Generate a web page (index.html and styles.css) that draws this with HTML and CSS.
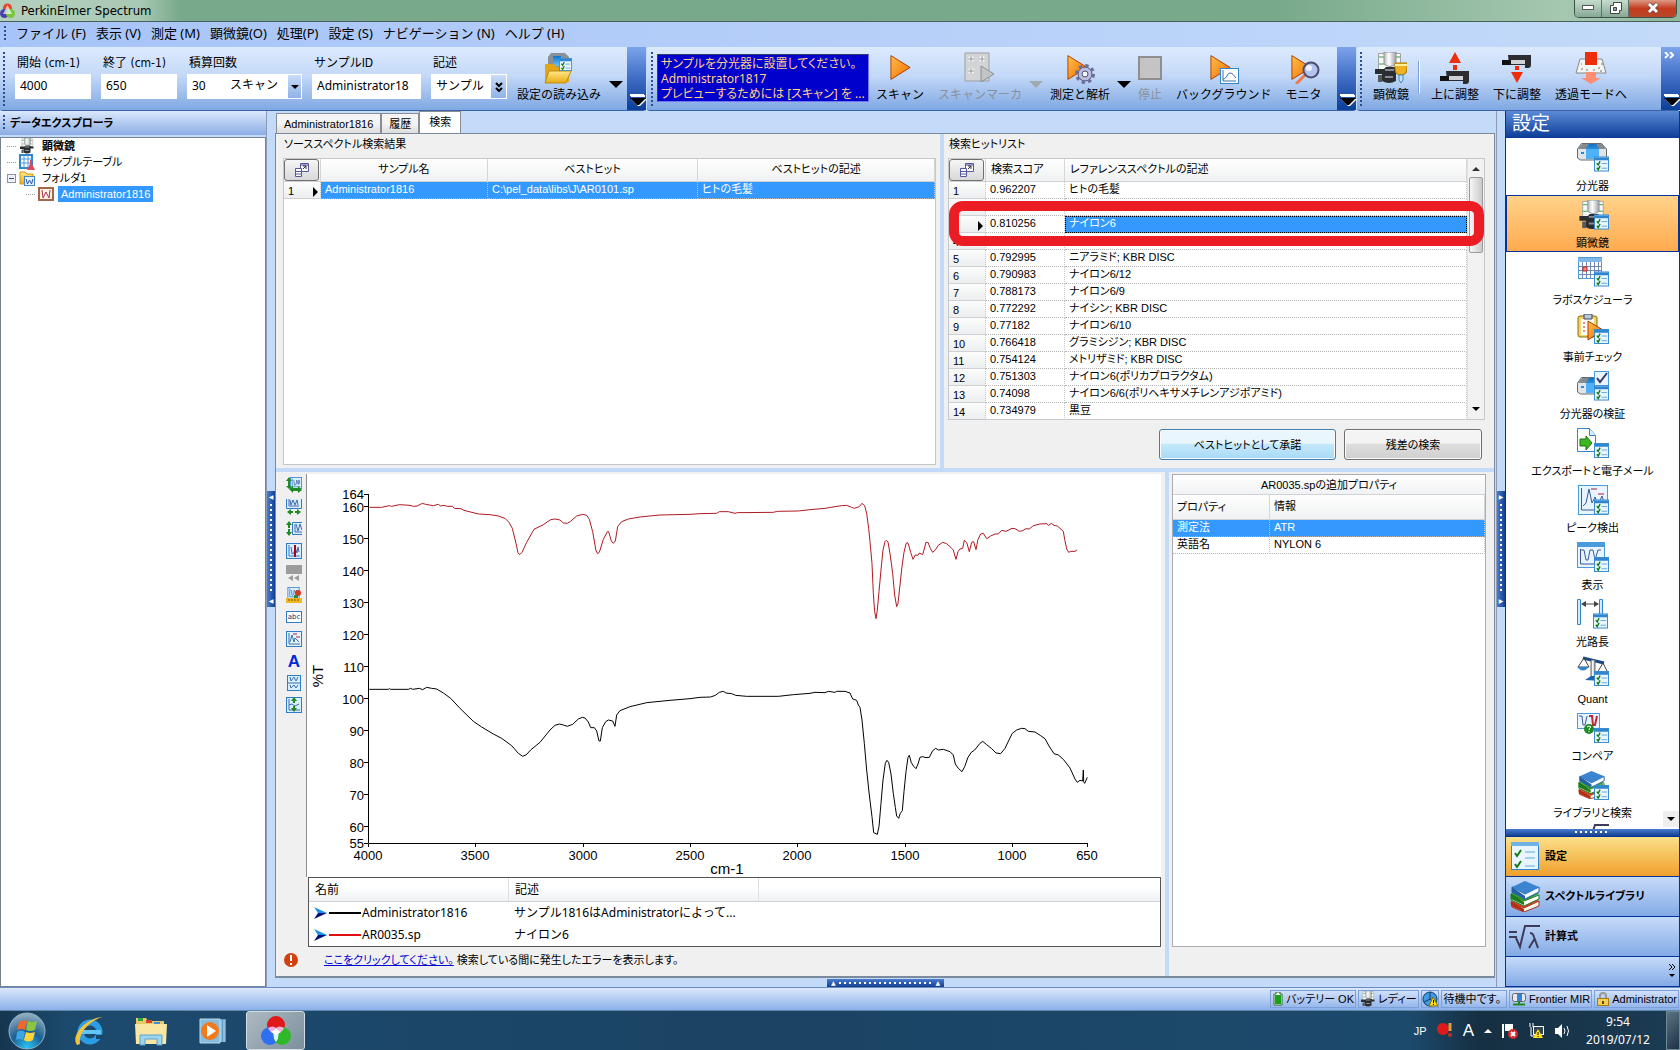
FILE: index.html
```html
<!DOCTYPE html>
<html lang="ja">
<head>
  <meta charset="UTF-8">
  <meta name="viewport" content="width=device-width, initial-scale=1.0">
  <title>PerkinElmer Spectrum</title>
  <link rel="stylesheet" href="styles.css">
</head>
<body>
  <!-- 共通アイコン -->
  <svg class="defs" width="0" height="0" aria-hidden="true">
    <defs>
      <linearGradient id="gOrange" x1="0" y1="0" x2="1" y2="1"><stop offset="0" stop-color="#ffc04a"/><stop offset="1" stop-color="#f26a00"/></linearGradient>
      <linearGradient id="gMetal" x1="0" y1="0" x2="1" y2="0"><stop offset="0" stop-color="#b4b8bb"/><stop offset=".4" stop-color="#fff"/><stop offset="1" stop-color="#9da2a6"/></linearGradient>
      <linearGradient id="gBlue" x1="0" y1="0" x2="0" y2="1"><stop offset="0" stop-color="#0d74cc"/><stop offset="1" stop-color="#6cc4ff"/></linearGradient>
      <linearGradient id="gFolder" x1="0" y1="0" x2="0" y2="1"><stop offset="0" stop-color="#ffe98a"/><stop offset="1" stop-color="#e8ab12"/></linearGradient>
      <symbol id="badge" viewBox="0 0 16 16">
        <rect x=".5" y=".5" width="15" height="15" fill="#eaf6ff" stroke="#2f86cf"/>
        <rect x="1" y="1" width="14" height="3" fill="#2f86cf"/>
        <path d="M3 7l1.500 2L6.500 5M3 12l1.500 2 2-4" fill="none" stroke="#157a15" stroke-width="1.500"/>
        <path d="M8 7.500h6M8 12.500h6" stroke="#5fa9de"/>
      </symbol>
      <symbol id="play" viewBox="0 0 24 28"><path d="M1 1v26l21-13z" fill="url(#gOrange)" stroke="#a63a00"/></symbol>
      <symbol id="scope" viewBox="0 0 28 32">
        <path d="M3.500 1.500h22v18h-22z" fill="#f6f8f6" stroke="#9fa69f"/><path d="M4 5h5M20 5h5M4 12h5M20 12h5" stroke="#3f9a4a"/>
        <path d="M9 0h12v12q-6 5-12 0z" fill="url(#gMetal)" stroke="#8f9498"/>
        <path d="M0 17h9l2-2h9l3 2h4v4h-6v8q-7 4-14 0v-7H0z" fill="#2b2e30"/>
        <path d="M10 18h9M10 25h8" stroke="#868c91" stroke-width="2"/><path d="M3 23h4v7H3z" fill="#55595c"/>
      </symbol>
      <symbol id="device" viewBox="0 0 30 18">
        <path d="M.500 6l4-5.500h20L29.500 6v9l-3 2h-23l-3-2z" fill="#e2e4e6" stroke="#666b70"/>
        <path d="M1 6l4-5h20l4 5z" fill="#858a8f"/><path d="M9 6l3-5h7l3 5v10H9z" fill="url(#gBlue)"/><path d="M9 6h13v10H9z" fill="#4fb2f8"/><path d="M4 10h3" stroke="#1e8ae0" stroke-width="2"/>
      </symbol>
      <symbol id="books" viewBox="0 0 32 32">
        <path d="M2 22l13 6 15-7v5l-15 6-12-5z" fill="#f6f2ee" stroke="#a83220"/><path d="M2 21l14-6 14 6-15 7z" fill="#d2401f"/><path d="M2 21v5l13 6v-3z" fill="#b62e10"/>
        <path d="M2 14l13 7 15-6v4l-15 7-13-6z" fill="#fff" stroke="#1d7a1d"/><path d="M2 13l14-6 14 7-15 7z" fill="#2f9d2f"/><path d="M2 13v6l13 6v-3z" fill="#1c7c1c"/>
        <path d="M3 7l13 7 14-7v5l-14 7-13-7z" fill="#f6faff" stroke="#1b5fa8"/><path d="M3 7l13-6 14 6-14 7z" fill="#3b85d0"/><path d="M3 7v5l13 7v-3z" fill="#2260a8"/>
      </symbol>
      <symbol id="fieldBtn" viewBox="0 0 14 14">
        <path d="M5.500.500h8v8h-8z" fill="#fff" stroke="#56589c"/><path d="M6 1h7v2H6z" fill="#9a9cd0"/><path d="M.500 5.500h6v8h-6zM1 8.500h5M1 11h5" fill="#fff" stroke="#56589c"/><path d="M8 6l3-3m0 3V3H8" stroke="#333" fill="none"/>
      </symbol>
      <symbol id="wave" viewBox="0 0 16 16"><rect x=".5" y=".5" width="15" height="15" fill="#d8efff" stroke="#2f7cc8"/><path d="M3 2v11h11" stroke="#2f7cc8" fill="none"/><path d="M5 4l1 7 2-1 1-6 2 6 1-6 1 5" fill="none" stroke="#4668a8"/></symbol>
      <symbol id="cursor" viewBox="0 0 14 14"><path d="M0 1l13 6H4z" fill="#1e90e8"/><path d="M0 13l13-6H4z" fill="#00107a"/></symbol>
    </defs>
  </svg>

  <header class="titlebar">
    <svg width="15" height="16" viewBox="0 0 15 16"><circle cx="7.500" cy="5" r="4.500" fill="#e8462c"/><circle cx="4.500" cy="10.500" r="4.500" fill="#4a3fae"/><circle cx="10.500" cy="10.500" r="4.500" fill="#78c83a"/><path d="M7.500 2l4.500 9H3z" fill="#fff" opacity=".65"/></svg>
    <h1>PerkinElmer Spectrum</h1>
    <div class="win-buttons">
      <button aria-label="最小化"><svg width="12" height="6"><rect x=".5" y=".5" width="11" height="4" fill="#fff" stroke="#555"/></svg></button>
      <button aria-label="元に戻す"><svg width="13" height="12"><path d="M4.500.500h8v8h-2v3h-9v-8h3z" fill="#fff" stroke="#444"/><path d="M4.500 5.500h3v3h-3z" fill="#8aa" stroke="#444"/></svg></button>
      <button class="close" aria-label="閉じる"><svg width="14" height="12"><path d="M3 2l8 8m0-8l-8 8" stroke="#444" stroke-width="4"/><path d="M3 2l8 8m0-8l-8 8" stroke="#fff" stroke-width="3"/></svg></button>
    </div>
  </header>

  <nav class="menubar">
    <span class="grip"></span>
    <a href="#">ファイル (F)</a><a href="#">表示 (V)</a><a href="#">測定 (M)</a><a href="#">顕微鏡(O)</a><a href="#">処理(P)</a><a href="#">設定 (S)</a><a href="#">ナビゲーション (N)</a><a href="#">ヘルプ (H)</a>
  </nav>

  <div class="toolbars">
    <div class="toolbar toolbar-scan">
      <span class="grip"></span>
      <div class="field"><label for="start">開始 (cm-1)</label><input id="start" type="text" value="4000"></div>
      <div class="field"><label for="end">終了 (cm-1)</label><input id="end" type="text" value="650"></div>
      <div class="field field-count"><label for="count">積算回数</label>
        <div class="combo"><input id="count" type="text" value="30"><select aria-label="単位"><option>スキャン</option></select><span class="drop"><i class="tri small"></i></span></div>
      </div>
      <div class="field field-id"><label for="sid">サンプルID</label><input id="sid" type="text" value="Administrator18"></div>
      <div class="field field-desc"><label for="desc">記述</label>
        <div class="combo"><input id="desc" type="text" value="サンプル"><button class="drop" aria-label="展開"><svg width="8" height="10"><path d="M1 1l3 3 3-3M1 6l3 3 3-3" fill="none" stroke="#000" stroke-width="2"/></svg></button></div>
      </div>
      <button class="tool"><svg width="32" height="32" viewBox="0 0 32 32"><path d="M5 5l3-4h14l4 4v12H5z" fill="#8a9096"/><path d="M10 4h8v10h-8z" fill="url(#gBlue)"/><path d="M2 12h9l3 3h12v15H2z" fill="#e2a617"/><path d="M6 19h22l-5 12H2z" fill="url(#gFolder)" stroke="#c18c10"/><use href="#badge" x="16" y="6" width="13" height="13"/></svg>設定の読み込み</button>
      <button class="arrow" aria-label="その他"><i class="tri"></i></button>
      <button class="cap" aria-label="オプション"><i class="tri capped"></i></button>
    </div>
    <div class="toolbar toolbar-run">
      <span class="grip"></span>
      <div class="message">サンプルを分光器に設置してください。<br>Administrator1817<br>プレビューするためには [スキャン] を ...</div>
      <button class="tool"><svg width="32" height="32" viewBox="0 0 32 32"><use href="#play" x="6" y="2" width="22" height="27"/></svg>スキャン</button>
      <button class="tool" disabled><svg width="32" height="32" viewBox="0 0 32 32"><path d="M1 1h24v28H1z" fill="#d2d4d6" stroke="#9b9ea2"/><path d="M7 4v6M4 7h6M18 4v6M15 7h6M7 16v6M4 19h6" stroke="#fff" stroke-width="3"/><path d="M7 4v6M4 7h6M18 4v6M15 7h6M7 16v6M4 19h6" stroke="#8e9195"/><path d="M17 14v16l13-8z" fill="#c2c4c6" stroke="#8e9195"/></svg>スキャンマーカ</button>
      <button class="arrow" disabled aria-label="マーカのその他"><i class="tri gray"></i></button>
      <button class="tool"><svg width="32" height="32" viewBox="0 0 32 32"><use href="#play" x="3" y="2" width="22" height="27"/><circle cx="21" cy="22" r="7" fill="#b9bde0" stroke="#4c5074"/><circle cx="21" cy="22" r="8.500" fill="none" stroke="#6a6e98" stroke-width="3" stroke-dasharray="3.400 3.270"/><circle cx="21" cy="22" r="3" fill="#f2f4ff" stroke="#4c5074"/></svg>測定と解析</button>
      <button class="arrow" aria-label="測定のその他"><i class="tri"></i></button>
      <button class="tool stop" disabled><svg width="32" height="32" viewBox="0 0 32 32"><rect x="5" y="5" width="22" height="22" fill="#c4c4c4" stroke="#8e8e8e" stroke-width="2"/></svg>停止</button>
      <button class="tool"><svg width="32" height="32" viewBox="0 0 32 32"><use href="#play" x="2" y="2" width="22" height="27"/><rect x="12.500" y="16.500" width="18" height="15" fill="#fff" stroke="#2f86cf"/><path d="M15 18v11h13M15 27c4 0 4-6 7-6s4 3 6 5" fill="none" stroke="#3a6ea8"/></svg>バックグラウンド</button>
      <button class="tool"><svg width="32" height="32" viewBox="0 0 32 32"><use href="#play" x="3" y="2" width="22" height="27"/><path d="M17 23l-9 9" stroke="#f0794a" stroke-width="3"/><circle cx="23" cy="18" r="7.500" fill="#b4c2f0" stroke="#4d4d70" stroke-width="2"/><circle cx="21" cy="16" r="3" fill="#eef2ff"/></svg>モニタ</button>
      <button class="cap" aria-label="オプション"><i class="tri capped"></i></button>
    </div>
    <div class="toolbar toolbar-stage">
      <span class="grip"></span>
      <button class="tool"><svg width="32" height="32" viewBox="0 0 32 32"><use href="#scope" width="28" height="32"/><path d="M20 11h12v6q0 5-4 6h-4q-4-1-4-6z" fill="#f0b020" stroke="#a87808"/><path d="M20 13h12" stroke="#fff0a0" stroke-width="2"/><path d="M24 23h4v5l-2 3-2-3z" fill="#bfe6ff" stroke="#4488bb"/></svg>顕微鏡</button>
      <span class="sep"></span>
      <button class="tool"><svg width="32" height="32" viewBox="0 0 32 32"><path d="M10 11l6-11 6 11zM14 13h4v5h-4z" fill="#ee2e0a"/><path d="M7 19h23v10q0 3-3 3h-3v-3H8z" fill="#2b2d30"/><path d="M1 24h9v5H1z" fill="#111"/><path d="M10 26h14" stroke="#cfd3d6" stroke-width="4"/></svg>上に調整</button>
      <button class="tool"><svg width="32" height="32" viewBox="0 0 32 32"><path d="M10 20l6 11 6-11zM14 14h4v4h-4z" fill="#ee2e0a"/><path d="M7 3h23v10q0 3-3 3h-3v-3H8z" fill="#2b2d30"/><path d="M1 8h9v5H1z" fill="#111"/><path d="M10 10h14" stroke="#cfd3d6" stroke-width="4"/></svg>下に調整</button>
      <button class="tool"><svg width="32" height="32" viewBox="0 0 32 32"><path d="M5 7h22l4 14H1z" fill="#f4f4f2" stroke="#888"/><path d="M6 17h2m3 1h2m10-2h2m1-4h2M6 12h1m18 7h2m-9-1h2" stroke="#777"/><path d="M10 0h12v13H10z" fill="#ee2e0a"/><path d="M11 20h10v6h5l-10 6-10-6h5z" fill="#ff8d72"/></svg>透過モードへ</button>
      <button class="cap" aria-label="オプション"><svg width="10" height="7"><path d="M1 0l3 3-3 3M6 0l3 3-3 3" fill="none" stroke="#fff" stroke-width="2"/></svg><i class="tri capped"></i></button>
    </div>
  </div>

  <div class="workspace">
    <aside class="explorer">
      <h2><span class="grip"></span>データエクスプローラ</h2>
      <ul class="tree">
        <li><span class="twig"></span><svg width="14" height="16" viewBox="0 0 28 32"><use href="#scope" width="28" height="32"/></svg><b>顕微鏡</b></li>
        <li><span class="twig"></span><svg width="16" height="16"><path d="M1 1h12v13H1z" fill="#fff" stroke="#2f86cf" stroke-width="2"/><path d="M1 5h12M1 9h12M5 1v13M9 1v13" stroke="#4a9ade"/><path d="M11 6h2v4l3 6h-8l3-6z" fill="#d84a5a"/></svg>サンプルテーブル</li>
        <li class="folder"><span class="twig open"></span><svg width="16" height="16"><path d="M1 2h5l2 2h6v10H1z" fill="url(#gFolder)" stroke="#d19a14"/><rect x="5.500" y="6.500" width="10" height="9" fill="#e4f2ff" stroke="#4488cc"/><path d="M7 9l1.500 5 2-4 2 4L14 9" fill="none" stroke="#2a56a8"/></svg>フォルダ1</li>
        <li class="leaf"><span class="twig"></span><svg width="16" height="14"><rect x="1" y="1" width="14" height="12" fill="#fbf0e2" stroke="#a06848" stroke-width="2"/><path d="M4 3l1 8 3-6 3 6 1-8" fill="none" stroke="#b03050"/></svg><span class="selected">Administrator1816</span></li>
      </ul>
    </aside>
    <div class="splitter"><span class="handle"><i>◀</i><i class="dots"></i><i>◀</i></span></div>

    <main class="document">
      <div class="tabs" role="tablist">
        <button role="tab">Administrator1816</button><button role="tab">履歴</button><button role="tab" class="active" aria-selected="true">検索</button>
      </div>
      <div class="page">
        <section class="results">
          <div class="source">
            <h3>ソーススペクトル検索結果</h3>
            <div class="grid-box">
              <table class="grid">
                <colgroup><col class="c-num"><col class="c-name"><col class="c-hit"><col></colgroup>
                <thead><tr><th><button class="chooser" aria-label="列の選択"><svg width="14" height="14"><use href="#fieldBtn"/></svg></button></th><th>サンプル名</th><th>ベストヒット</th><th>ベストヒットの記述</th></tr></thead>
                <tbody><tr class="current all"><td><span class="rownum">1<i class="ptr"></i></span></td><td>Administrator1816</td><td>C:\pel_data\libs\J\AR0101.sp</td><td>ヒトの毛髪</td></tr></tbody>
              </table>
            </div>
          </div>
          <div class="hits">
            <h3>検索ヒットリスト</h3>
            <div class="grid-box hit-box">
              <div class="hit-scroll">
                <table class="grid left">
                  <colgroup><col class="c-num"><col class="c-score"><col></colgroup>
                  <thead><tr><th><button class="chooser" aria-label="列の選択"><svg width="14" height="14"><use href="#fieldBtn"/></svg></button></th><th>検索スコア</th><th>レファレンススペクトルの記述</th></tr></thead>
                  <tbody>
                    <tr><td>1</td><td>0.962207</td><td>ヒトの毛髪</td></tr>
                    <tr><td>2</td><td></td><td></td></tr>
                    <tr class="current"><td><span class="rownum"><i class="ptr"></i></span></td><td>0.810256</td><td>ナイロン6</td></tr>
                    <tr><td>4</td><td>0.795808</td><td></td></tr>
                    <tr><td>5</td><td>0.792995</td><td>ニアラミド; KBR DISC</td></tr>
                    <tr><td>6</td><td>0.790983</td><td>ナイロン6/12</td></tr>
                    <tr><td>7</td><td>0.788173</td><td>ナイロン6/9</td></tr>
                    <tr><td>8</td><td>0.772292</td><td>ナイシン; KBR DISC</td></tr>
                    <tr><td>9</td><td>0.77182</td><td>ナイロン6/10</td></tr>
                    <tr><td>10</td><td>0.766418</td><td>グラミシジン; KBR DISC</td></tr>
                    <tr><td>11</td><td>0.754124</td><td>メトリザミド; KBR DISC</td></tr>
                    <tr><td>12</td><td>0.751303</td><td>ナイロン6(ポリカプロラクタム)</td></tr>
                    <tr><td>13</td><td>0.74098</td><td>ナイロン6/6(ポリヘキサメチレンアジポアミド)</td></tr>
                    <tr><td>14</td><td>0.734979</td><td>黒豆</td></tr>
                  </tbody>
                </table>
              </div>
              <div class="scrollbar"><i class="tri up"></i><span class="thumb"></span><i class="tri small"></i></div>
              <div class="callout"></div>
            </div>
            <div class="actions">
              <button class="primary">ベストヒットとして承諾</button>
              <button>残差の検索</button>
            </div>
          </div>
        </section>

        <section class="detail">
          <div class="plot-pane">
            <div class="plot-row">
              <div class="plot-tools">
                <button aria-label="全体表示"><svg width="16" height="16"><use href="#wave" x="4" y="0" width="12" height="12"/><path d="M0 4l3-4 3 4H4v5h2l-3 3-3-3h2V4z" fill="#1f8a24"/><path d="M3 12l4-3v2h5V9l4 4-4 3v-2H7v2z" fill="#1f8a24"/></svg></button>
                <button aria-label="横軸"><svg width="16" height="16"><path d="M.5 0v9.500h15V0" fill="#d8efff" stroke="#2f7cc8"/><path d="M3 0v7h10M4 1l1 5 2-5 2 5 2-5 1 5" fill="none" stroke="#4668a8"/><path d="M1 13l4-3v2h2v2H5v2zM15 13l-4-3v2H9v2h2v2z" fill="#1f8a24"/></svg></button>
                <button aria-label="縦軸"><svg width="16" height="16"><path d="M16 1.500H6.500v12H16" fill="#d8efff" stroke="#2f7cc8"/><path d="M9 3v8h7M10 3l2 7 2-7 2 6" fill="none" stroke="#4668a8"/><path d="M0 4l3-4 3 4H4v3H2V4zM0 11l3 4 3-4H4V8H2v3z" fill="#1f8a24"/></svg></button>
                <button aria-label="カーソル"><svg width="16" height="16"><use href="#wave" width="16" height="16"/><path d="M9 2v12" stroke="#b00018" stroke-width="2"/></svg></button>
                <button aria-label="巻き戻し" disabled><svg width="16" height="16"><path d="M0 0h16v9H0zM2 13l5-3v6zM8 13l5-3v6z" fill="#9c9c9c"/></svg></button>
                <button aria-label="目盛"><svg width="16" height="16"><use href="#wave" x="1" width="13" height="12"/><circle cx="12" cy="6" r="3" fill="#d63a20"/><path d="M8 8h4v3H8z" fill="#2a8a3a"/><path d="M0 11h16v5H0z" fill="#f0b824"/><path d="M3 12v2M6 12v2M9 12v2M12 12v2" stroke="#7a5200"/></svg></button>
                <button class="abc" aria-label="ラベル">abc</button>
                <button aria-label="ピーク"><svg width="16" height="16"><rect x=".5" y=".5" width="15" height="15" fill="#e4f4ff" stroke="#2f7cc8"/><path d="M3 2v11h11M4 11l2-7 2 7 1-4 4 4" fill="none" stroke="#3a6ea8"/><path d="M7 3h4M10 6h4" stroke="#b02030"/></svg></button>
                <button class="letter" aria-label="文字">A</button>
                <button aria-label="分割表示"><svg width="16" height="16"><rect x="1.500" y=".5" width="13" height="15" fill="#d8efff" stroke="#2f7cc8"/><path d="M2 8h12M4 2l1 4 3-4 2 4 2-4M4 10l1 3 3-3 2 3 2-3" fill="none" stroke="#3a6ea8"/></svg></button>
                <button aria-label="重ね表示"><svg width="16" height="16"><rect x=".5" y=".5" width="15" height="15" fill="#d8efff" stroke="#2f7cc8"/><path d="M3 2v11h11M3 8l3-1 3 2 4-2" fill="none" stroke="#3a6ea8"/><path d="M5 4l3-4 3 4H9v2H7V4zM5 11l3 4 3-4H9V9H7v2z" fill="#1f8a24"/></svg></button>
              </div>
              <svg class="plot" viewBox="307 474 854 403" role="img" aria-label="スペクトル">
                <path class="axis" d="M368.500 494v349.500H1088M364 494.500h4M364 506.500h4M364 538.500h4M364 570.500h4M364 602.500h4M364 634.500h4M364 666.500h4M364 698.500h4M364 730.500h4M364 762.500h4M364 794.500h4M364 826.500h4M364 843.500h4M368.500 844v3M475.500 844v3M583.500 844v3M690.500 844v3M797.500 844v3M905.500 844v3M1012.500 844v3M1087.500 844v3"/>
                <g class="ylabels">
                  <text x="364" y="499">164</text><text x="364" y="512">160</text><text x="364" y="544">150</text><text x="364" y="576">140</text><text x="364" y="608">130</text><text x="364" y="640">120</text><text x="364" y="672">110</text><text x="364" y="704">100</text><text x="364" y="736">90</text><text x="364" y="768">80</text><text x="364" y="800">70</text><text x="364" y="832">60</text><text x="364" y="848">55</text>
                </g>
                <g class="xlabels">
                  <text x="368" y="860">4000</text><text x="475" y="860">3500</text><text x="583" y="860">3000</text><text x="690" y="860">2500</text><text x="797" y="860">2000</text><text x="905" y="860">1500</text><text x="1012" y="860">1000</text><text x="1087" y="860">650</text>
                  <text class="unit" x="727" y="874">cm-1</text>
                  <text class="unit" transform="translate(323 676) rotate(-90)">%T</text>
                </g>
                <!-- 曲線は1pxを3単位とする座標 -->
                <g transform="translate(260 460) scale(.33333)">
                  <polyline class="ref" points="328,142 365,142 388,137 395,139 418,134 450,136 460,139 472,138 487,130 497,133 520,137 535,133 542,138 552,136 562,139 577,139 583,145 603,146 612,151 655,162 690,164 715,168 735,175 747,187 757,205 768,250 774,278 779,284 786,277 800,247 822,208 850,194 872,179 885,177 900,180 910,189 922,190 932,184 950,168 968,163 980,166 988,178 998,215 1008,272 1013,281 1018,277 1030,238 1042,215 1046,215 1054,243 1060,250 1066,243 1073,200 1085,185 1105,177 1140,171 1200,165 1290,163 1320,161"/>
                  <polyline class="sample" points="328,688 385,688 388,686 392,688 445,688 452,685 458,688 478,685 488,689 500,682 515,685 530,687 550,699 572,715 600,745 640,784 665,801 700,822 725,835 755,857 775,880 788,889 798,885 812,870 840,847 870,810 885,796 898,792 910,795 922,799 938,793 955,777 967,772 975,774 985,786 992,803 1003,803 1010,813 1017,843 1021,843 1027,803 1037,785 1045,780 1058,783 1065,799 1070,765 1080,752 1110,740 1160,728 1230,721 1290,716 1320,712"/>
                  <g transform="translate(1320 30)">
                    <polyline class="ref" points="0,131 50,130 58,125 85,125 105,130 112,128 220,127 232,124 295,123 330,119 375,115 405,110 425,107 440,106 455,112 463,115 478,110 486,100 494,107 500,130 506,175 510,215 516,280 520,370 524,425 528,446 532,420 537,365 543,300 549,240 555,215 559,211 564,216 570,250 578,310 584,375 590,410 594,400 600,345 606,290 612,247 618,222 622,217 626,225 632,247 639,268 646,255 654,256 658,249 668,254 672,240 678,217 684,217 691,235 698,247 706,240 715,226 728,217 740,221 752,232 760,240 764,255 768,268 774,245 780,237 788,235 793,211 800,217 808,245 815,217 821,215 828,239 834,208 842,192 850,190 860,206 872,198 885,192 895,192 905,181 918,184 936,175 945,176 958,184 968,182 978,176 988,177 1000,167 1020,162 1040,161 1046,166 1054,160 1062,166 1072,168 1090,184 1094,208 1100,237 1106,247 1112,244 1125,244 1131,240"/>
                    <polyline class="sample" points="0,682 32,681 46,676 58,667 70,664 78,669 95,671 107,676 140,679 235,679 280,674 330,670 345,667 375,668 385,664 405,667 410,664 435,664 450,669 458,687 470,691 475,705 480,712 486,750 493,820 500,900 508,975 516,1040 521,1088 532,1093 537,1070 543,1000 549,930 556,880 561,871 566,877 573,912 580,970 586,1012 590,1038 596,1045 601,1030 607,1022 612,965 618,905 624,862 628,856 634,878 642,890 648,896 654,882 660,862 668,860 678,863 688,862 698,842 707,835 715,840 730,838 750,845 760,855 766,882 775,895 786,905 794,890 804,862 814,847 824,840 840,820 848,814 860,824 875,836 888,849 902,851 915,835 927,810 937,790 950,780 965,775 975,776 985,784 1005,786 1022,797 1035,806 1047,828 1062,851 1075,855 1090,868 1110,894 1125,927 1132,937 1140,931 1148,933 1150,900 1151,935 1154,940 1162,922"/>
                  </g>
                </g>
              </svg>
            </div>
            <table class="legend">
              <colgroup><col class="l-name"><col class="l-desc"><col></colgroup>
              <thead><tr><th>名前</th><th>記述</th><th></th></tr></thead>
              <tbody>
                <tr><td><span><svg width="14" height="14"><use href="#cursor"/></svg><i class="line"></i>Administrator1816</span></td><td>サンプル1816はAdministratorによって...</td><td></td></tr>
                <tr><td><span><svg width="14" height="14"><use href="#cursor"/></svg><i class="line red"></i>AR0035.sp</span></td><td>ナイロン6</td><td></td></tr>
              </tbody>
            </table>
            <p class="error">
              <svg width="14" height="14"><circle cx="7" cy="7" r="7" fill="#d1400e"/><path d="M7 2v6M7 10v2" stroke="#fff" stroke-width="2"/></svg>
              <span><a href="#">ここをクリックしてください。</a> 検索している間に発生したエラーを表示します。</span>
            </p>
          </div>
          <div class="props">
            <div class="grid-box">
              <h3>AR0035.spの追加プロパティ</h3>
              <table class="grid left">
                <colgroup><col class="c-prop"><col></colgroup>
                <thead><tr><th>プロパティ</th><th>情報</th></tr></thead>
                <tbody><tr class="current all"><td>測定法</td><td>ATR</td></tr><tr><td>英語名</td><td>NYLON 6</td></tr></tbody>
              </table>
            </div>
          </div>
        </section>
      </div>
      <div class="bottom-split"><span class="handle flat"><i>▲</i><i class="dots"></i><i>▲</i></span></div>
    </main>

    <div class="splitter"><span class="handle"><i>▶</i><i class="dots"></i><i>▶</i></span></div>

    <aside class="navigator">
      <h2>設定</h2>
      <div class="nav-list">
        <a href="#"><svg width="32" height="30" viewBox="0 0 32 30"><use href="#device" width="30" height="18"/><use href="#badge" x="17" y="13" width="15" height="16"/></svg>分光器</a>
        <a href="#" class="active"><svg width="32" height="30" viewBox="0 0 32 30"><use href="#scope" x="2" width="27" height="30"/><use href="#badge" x="17" y="14" width="15" height="16"/></svg>顕微鏡</a>
        <a href="#"><svg width="32" height="30" viewBox="0 0 32 30"><rect x="1.500" y=".5" width="23" height="21" fill="#fff" stroke="#4a9ade"/><path d="M1 1h24v4H1z" fill="#7fb8e8"/><path d="M2 9.500h22M2 13.500h22M2 17.500h22M5.500 5v16M9.500 5v16M13.500 5v16M17.500 5v16M21.500 5v16" stroke="#7088b8"/><path d="M6 10h4v4H6z" fill="#ff8a7a" stroke="#c02020"/><use href="#badge" x="17" y="14" width="15" height="16"/></svg>ラボスケジューラ</a>
        <a href="#"><svg width="32" height="30" viewBox="0 0 32 30"><rect x="1" y="2" width="19" height="21" rx="2" fill="#f5d568" stroke="#8a6a10"/><path d="M4 5h13v16H4z" fill="#fff"/><path d="M7 0h8v5H7z" fill="#b9c8e0" stroke="#445"/><path d="M6 9h3M6 13h3M6 17h3M11 9h3" stroke="#d02020" stroke-dasharray="2 1"/><path d="M11 7v19l15-10z" fill="url(#gOrange)" stroke="#a63a00"/><use href="#badge" x="17" y="15" width="15" height="15"/></svg>事前チェック</a>
        <a href="#"><svg width="32" height="30" viewBox="0 0 32 30"><use href="#device" x="0" y="6" width="30" height="18"/><rect x="17.500" y=".5" width="14" height="14" fill="#e8f4ff" stroke="#4a9ade"/><path d="M20 7l3 4 7-9" fill="none" stroke="#33396a" stroke-width="2"/><use href="#badge" x="17" y="14" width="15" height="16"/></svg>分光器の検証</a>
        <a href="#"><svg width="32" height="30" viewBox="0 0 32 30"><path d="M.500.500h12l6 7v16H.500z" fill="#fff" stroke="#2f86cf"/><path d="M12.500.500v7h6" fill="#d8ecff" stroke="#2f86cf"/><path d="M3 11h6V8l6 7-6 7v-4H3z" fill="#3cb81e" stroke="#1b7010"/><use href="#badge" x="17" y="15" width="15" height="15"/></svg>エクスポートと電子メール</a>
        <a href="#"><svg width="32" height="30" viewBox="0 0 32 30"><rect x="1.500" y=".5" width="29" height="29" fill="#e8f4ff" stroke="#4a9ade"/><path d="M4.500 3v22h22M6 21l3-3 3-14 3 14 3-6 3 8 4-9 3 9" fill="none" stroke="#3a5a98"/><path d="M14 4h6M21 9h6" stroke="#b02030"/><use href="#badge" x="17" y="14" width="15" height="16"/></svg>ピーク検出</a>
        <a href="#"><svg width="32" height="30" viewBox="0 0 32 30"><rect x=".5" y=".5" width="27" height="25" fill="#e8f4ff" stroke="#4a9ade"/><path d="M0 0h28v5H0z" fill="#4a9ade"/><path d="M3.500 7v15h20M4 8h3l2 10h2l2-10h3l2 10 3-10h3" fill="none" stroke="#3a5a98"/><use href="#badge" x="17" y="15" width="15" height="15"/></svg>表示</a>
        <a href="#"><svg width="32" height="30" viewBox="0 0 32 30"><path d="M.500.500h3v25h-3zM22.500.500h3v15h-3z" fill="#d0eaff" stroke="#2f86cf"/><path d="M5 5h16" stroke="#444"/><path d="M4 5l5-3v6zM22 5l-5-3v6z" fill="#444"/><use href="#badge" x="16" y="14" width="15" height="16"/></svg>光路長</a>
        <a href="#"><svg width="32" height="30" viewBox="0 0 32 30"><path d="M6 2l21 5" stroke="#164a8a" stroke-width="3"/><path d="M7 2L1 11h11zM26 7l-6 10h11z" fill="none" stroke="#444"/><path d="M0 11h12q-6 7-12 0z" fill="#2f86cf"/><path d="M14 4h4v17h-4z" fill="url(#gMetal)" stroke="#666"/><path d="M8 24l6-4h6l4 5z" fill="#1c64b0"/><use href="#badge" x="17" y="15" width="15" height="15"/></svg>Quant</a>
        <a href="#"><svg width="32" height="30" viewBox="0 0 32 30"><rect x=".5" y=".5" width="22" height="15" fill="#e8f4ff" stroke="#4a9ade"/><path d="M2 3h3l1 9h2l2-9" fill="none" stroke="#3a5a98"/><path d="M12 3h3l1 9h2l2-9" fill="none" stroke="#c02838" stroke-width="2"/><circle cx="12" cy="16" r="5" fill="#1f8a24"/><path d="M10 14q2-2 4 0-2 1-2 3M12 18v1" stroke="#fff" fill="none"/><use href="#badge" x="17" y="15" width="15" height="15"/></svg>コンペア</a>
        <a href="#"><svg width="32" height="30" viewBox="0 0 32 30"><use href="#books" width="29" height="29"/><use href="#badge" x="17" y="15" width="15" height="15"/></svg>ライブラリと検索</a>
        <a href="#" class="peeking" aria-label="計算式の設定"><svg width="32" height="30"><path d="M14 13l4-12h14" fill="none" stroke="#3c3c5a" stroke-width="2"/></svg></a>
        <button class="nav-more" aria-label="下へ"><i class="tri small"></i></button>
      </div>
      <div class="nav-grip"><i class="dots"></i></div>
      <button class="nav-button active"><svg width="32" height="32" viewBox="0 0 32 32"><rect x="2.500" y="2.500" width="27" height="27" fill="#eaf6ff" stroke="#2f86cf"/><path d="M2 2h28v4H2z" fill="#6fb2e4"/><path d="M6 13l2 3 4-6M6 24l2 3 4-6" fill="none" stroke="#157a15" stroke-width="2"/><path d="M16 12h10M16 18h10M16 26h10" stroke="#5fa9de"/></svg>設定</button>
      <button class="nav-button"><svg width="32" height="32"><use href="#books"/></svg>スペクトルライブラリ</button>
      <button class="nav-button"><svg width="32" height="32"><path d="M0 12h8M0 17h8M7 18l4 9 5-21h15M21 13q3 0 4 4l4 11M26 18l-6 10" fill="none" stroke="#3c3c5a" stroke-width="2"/></svg>計算式</button>
      <button class="nav-button last" aria-label="ボタンの構成"><svg width="8" height="16"><path d="M1 1l3 3-3 3M4 1l3 3-3 3" fill="none" stroke="#000"/><path d="M1 11h6l-3 3z"/></svg></button>
    </aside>
  </div>

  <footer class="statusbar">
    <span><svg width="10" height="14"><path d="M3 0h4v2h2v11H1V2h2z" fill="#fff" stroke="#2a6a2a"/><path d="M2 3h6v9H2z" fill="#18a018"/></svg>バッテリー OK</span>
    <span><svg width="14" height="16" viewBox="0 0 28 32"><use href="#scope" width="28" height="32"/></svg>レディー</span>
    <span class="only"><svg width="16" height="16"><circle cx="8" cy="8" r="7" fill="#3f9ade" stroke="#123a6a"/><path d="M8 1v7l5 5M8 8l-6 3" stroke="#123a6a" fill="none"/><path d="M11 6l5 9H7z" fill="#ffe020" stroke="#8a6a00"/><path d="M11.500 9v3M11.500 13v1" stroke="#000"/></svg></span>
    <span class="wait">待機中です。</span>
    <span><svg width="14" height="14"><rect x=".5" y="1.500" width="13" height="8" rx="2" fill="#e8e8e8" stroke="#666"/><path d="M5 2h5v7H5z" fill="#2f86e0"/><path d="M7 9v3M1 12.500h12" stroke="#1f8a24" stroke-width="2"/></svg>Frontier MIR</span>
    <span><svg width="12" height="14"><path d="M3 7V4q0-3 3-3t3 3v3" fill="none" stroke="#999" stroke-width="2"/><rect x=".5" y="6.500" width="11" height="7" fill="#f8cf50" stroke="#a87808"/><path d="M6 9v3" stroke="#604000" stroke-width="2"/></svg>Administrator</span>
  </footer>

  <div class="taskbar">
    <button class="start" aria-label="スタート"><svg width="38" height="38" viewBox="0 0 38 38"><defs><radialGradient id="orb" cx=".5" cy=".95" r=".9"><stop offset="0" stop-color="#28c4f4"/><stop offset=".5" stop-color="#1b5f94"/><stop offset="1" stop-color="#8fa9bc"/></radialGradient></defs><circle cx="19" cy="19" r="18" fill="url(#orb)" stroke="#8bb4cc"/><path d="M11 10q4-3 8-1l-2 9q-4-2-8 0z" fill="#f0682a"/><path d="M20 9q4 2 9 0l-2 9q-5 2-9 0z" fill="#8cc63e"/><path d="M9 20q4-3 8 0l-2 8q-4-2-7 0z" fill="#3fa4e8"/><path d="M18 20q4 2 9 0l-2 8q-5 3-9 0z" fill="#ffd23a"/></svg></button>
    <button aria-label="Internet Explorer"><svg width="34" height="34" viewBox="0 0 34 34"><circle cx="18" cy="18" r="9.500" fill="none" stroke="#2b9de4" stroke-width="6"/><path d="M10 18h19" stroke="#63c4f6" stroke-width="4"/><path d="M24 21h8v4h-8z" fill="#1a4767"/><path d="M5 31C-2 22 14 3 32 3c-7 0-26 12-24 27z" fill="#f2c33c"/></svg></button>
    <button aria-label="エクスプローラー"><svg width="34" height="32" viewBox="0 0 34 32"><path d="M2 3h10l2 3h16v22H2z" fill="#e8c766"/><path d="M4 3h5v3H4z" fill="#2fa43c"/><path d="M12 5h6v3h-6z" fill="#d84030"/><path d="M20 7h6v3h-6z" fill="#3f8ed8"/><path d="M1 9h32l-1 20H2z" fill="#f9e6a2"/><path d="M6 30V20h22v10h-5v-6H11v6z" fill="#9ed4f0" stroke="#5aa4cc"/></svg></button>
    <button aria-label="メディアプレーヤー"><svg width="28" height="28" viewBox="0 0 28 28"><path d="M4 2h23v23H4z" fill="#5c9cc4"/><path d="M22 3v22M25 3v22" stroke="#bfe0f4"/><path d="M1 2h20v24H1z" fill="#88bddd" stroke="#b9dbee"/><circle cx="11" cy="14" r="9" fill="#f07a1c"/><path d="M8 8v12l9-6z" fill="#fff"/></svg></button>
    <button class="running" aria-label="PerkinElmer Spectrum"><svg width="32" height="32" viewBox="0 0 32 32"><circle cx="16" cy="10" r="9" fill="#e01818"/><circle cx="10" cy="21" r="9" fill="#2f6ef0"/><circle cx="22" cy="21" r="9" fill="#2fb82a"/><path d="M8 13q5-3 8 0 3-3 8 0-2 5-8 6-6-1-8-6z" fill="#f6b0d8"/><path d="M16 13q5 7 0 14-5-7 0-14z" fill="#d8f4ff"/><path d="M16 14l5 3-5 3-5-3z" fill="#fff"/></svg></button>
    <div class="tray">
      <span>JP</span>
      <svg width="16" height="16"><circle cx="6" cy="6" r="6" fill="#e01a1a"/><path d="M13 0v8" stroke="#d6a040" stroke-width="3"/><circle cx="13" cy="12" r="2" fill="#c03020"/></svg>
      <span class="ime">A</span>
      <i class="tri up white"></i>
      <svg width="16" height="16"><path d="M1 1v14" stroke="#fff" stroke-width="2"/><path d="M3 1h8v7H3z" fill="#fff"/><circle cx="11" cy="11" r="5" fill="#d82828"/><path d="M9 9l4 4m0-4l-4 4" stroke="#fff" stroke-width="2"/></svg>
      <svg width="16" height="16"><path d="M2 0v4M5 0v4M3 4v9h5" stroke="#fff" fill="none"/><rect x="5.500" y="3.500" width="10" height="8" fill="#345" stroke="#fff"/><path d="M10 6l5 9H5z" fill="#ffe020"/><path d="M10 9v3M10 13v1" stroke="#000"/></svg>
      <svg width="16" height="16"><path d="M1 5h3l4-4v14l-4-4H1z" fill="#fff"/><path d="M10 5q2 3 0 6M13 3q3 5 0 10" stroke="#fff" fill="none"/></svg>
      <div class="clock"><span>9:54</span><span>2019/07/12</span></div>
      <button class="peek" aria-label="デスクトップの表示"></button>
    </div>
  </div>
</body>
</html>
```

FILE: styles.css
```css
* { box-sizing: border-box; }
body {
  margin: 0;
  height: 100vh;
  display: flex;
  flex-direction: column;
  overflow: hidden;
  background: #c3daf9;
  color: #000;
  font: 11px/16px "Liberation Sans", "Noto Sans CJK JP", sans-serif;
  font-feature-settings: "palt";
}
h1, h2, h3, p, ul { margin: 0; padding: 0; font-size: 11px; font-weight: normal; }
button, input, select { font: inherit; font-feature-settings: inherit; color: inherit; margin: 0; }
button { border: 0; padding: 0; background: none; }
a { color: inherit; text-decoration: none; }
svg { display: block; flex: none; }
.defs { position: absolute; }
i { font-style: normal; }

.tri {
  display: block;
  border: 7px solid transparent;
  border-top-color: #000;
  border-bottom: 0;
}
.tri.small { border-width: 4px 4px 0; }
.tri.gray { border-top-color: #a3a9b0; }
.tri.up { border: 4px solid transparent; border-top: 0; border-bottom-color: #333; }
.tri.up.white { border-bottom-color: #fff; }
.tri.capped { position: relative; filter: drop-shadow(1px 1px 0 #fff); }
.tri.capped::before {
  content: "";
  position: absolute;
  left: -7px; top: -11px;
  width: 14px; height: 2px;
  background: #fff;
}
.grip {
  flex: none;
  width: 2px;
  background: repeating-linear-gradient(#2a4d94 0 2px, transparent 2px 4px);
}

/* タイトルバー */
.titlebar {
  flex: none;
  height: 22px;
  display: flex;
  align-items: center;
  gap: 6px;
  border-bottom: 1px solid #48605a;
  background: linear-gradient(90deg, #b5d0bf 0, #a9c9b4 140px, #78a98b 180px, #78a98b 76%, #a5c8b0 93%, #8fb79d);
}
.titlebar h1 { font: 13px/20px "DejaVu Sans Condensed", "Noto Sans", sans-serif; }
.win-buttons { margin: 0 3px 4px auto; display: flex; height: 18px; border: 1px solid #3f524a; border-top: 0; border-radius: 0 0 5px 5px; overflow: hidden; }
.win-buttons button { width: 27px; display: grid; place-items: center; border-right: 1px solid #5d7268; background: linear-gradient(#c5dccd, #86a895); }
.win-buttons .close { width: 47px; border: 0; background: linear-gradient(#dd9a86, #c43a1e 50%, #b8482c); }

.menubar {
  flex: none;
  height: 25px;
  padding: 3px 0 5px 4px;
  display: flex;
  gap: 10px;
  background: linear-gradient(90deg, #a7c4f8, #c3daf9);
  font: 13px/17px "Noto Sans", "Noto Sans CJK JP", sans-serif;
  font-feature-settings: normal;
}
.menubar .grip { margin: 1px 0; }

/* ツールバー */
.toolbars { flex: none; display: flex; gap: 1px; height: 64px; font-size: 12px; font-feature-settings: normal; }
.toolbar {
  display: flex;
  min-width: 0;
  padding: 5px 0 4px 3px;
  border-bottom: 1px solid #3b61a8;
  border-radius: 3px;
  background: linear-gradient(#dceafd, #c4d9f8 45%, #7fa8e2);
}
.toolbar-scan { flex: 0 0 646px; gap: 10px; }
.toolbar-run { flex: 1; padding-left: 4px; }
.toolbar-stage { flex: 0 0 323px; }
.toolbar-stage .grip { margin-right: 4px; }
.toolbar, .field input { font-family: "Noto Sans", "Noto Sans CJK JP", sans-serif; }
.field { width: 76px; display: flex; flex-direction: column; gap: 3px; padding-top: 3px; white-space: nowrap; }
.field label { padding-left: 2px; line-height: 16px; font-family: "DejaVu Sans Condensed", "Noto Sans", "Noto Sans CJK JP", sans-serif; }
.field input { width: 100%; height: 25px; padding: 0 5px 3px; border: 0; background: #fff; }
.field-count { width: 115px; }
.field-id { width: 109px; }
.combo { display: flex; height: 25px; background: #fff; position: relative; }
.combo input { flex: 1; min-width: 0; }
.combo select { flex: 0 0 72px; border: 0; background: none; appearance: none; padding: 0 0 3px; }
.drop { width: 15px; display: grid; place-items: center; border: 1px solid #fff; background: linear-gradient(#c9dcf8, #8fb2e8); }
.combo span.drop { position: absolute; right: 0; top: 0; height: 25px; pointer-events: none; }
.field-desc .drop { width: 17px; }
.tool { display: flex; flex-direction: column; align-items: center; gap: 1px; padding: 0 7px; line-height: 19px; white-space: nowrap; }
.toolbar-scan .tool { padding: 0; }
.tool.stop { padding: 0 3px; }
.tool:disabled { color: #8a919b; }
.arrow { width: 14px; padding-top: 10px; }
.toolbar-scan .arrow { margin: 0 -8px 0 -2px; }
.cap {
  width: 19px;
  margin: -5px 0 -4px auto;
  padding: 5px 0 5px 3px;
  display: flex;
  flex-direction: column;
  justify-content: flex-end;
  background: linear-gradient(#7ba4ea, #3f6cc4 50%, #0c3f9a);
}
.cap svg { margin-bottom: auto; }
.message {
  width: 212px;
  height: 48px;
  margin: 2px 0 0 4px;
  padding: 1px 3px;
  border: 1px solid #3a3a6a;
  border-right-color: #7474ff;
  border-bottom-color: #7474ff;
  background: #0000cc;
  color: #ffcf87;
  line-height: 15px;
  white-space: nowrap;
  overflow: hidden;
  font-feature-settings: "palt";
}
.sep { width: 2px; margin: 9px 4px 13px 2px; border-left: 1px solid #7c9fd8; background: #fff; }

/* 作業領域 */
.workspace { flex: 1; min-height: 0; display: flex; }
.explorer { flex: 0 0 266px; display: flex; flex-direction: column; }
.explorer h2 {
  height: 24px;
  margin-bottom: 2px;
  padding: 4px 0 4px 3px;
  display: flex;
  gap: 5px;
  background: linear-gradient(#dbe8fc, #8bade4);
  font-weight: bold;
}
.tree { flex: 1; padding-left: 6px; list-style: none; border: 1px solid #76828f; background: #fff; }
.tree li { display: flex; align-items: center; gap: 7px; height: 16px; }
.tree svg { width: 16px; }
.tree .selected { padding: 0 3px; margin-left: -3px; background: #3399ff; color: #fff; }
.tree .leaf { padding-left: 19px; }
.twig { width: 9px; margin-right: -4px; border-bottom: 1px dotted #999; }
.twig.open { height: 9px; border: 1px solid #8a95a0; background: linear-gradient(#33508a, #33508a) center / 5px 1px no-repeat, #eef2f8; }

.splitter { flex: 0 0 9px; display: flex; border-left: 1px solid #8d9cb4; }
.splitter .handle { margin-top: 380px; }
.handle {
  width: 8px;
  height: 116px;
  padding: 2px 0;
  display: flex;
  flex-direction: column;
  align-items: center;
  gap: 3px;
  background: linear-gradient(90deg, #4a7cd0, #123f92);
  color: #fff;
  font: 6px/8px "DejaVu Sans", sans-serif;
}
.dots { flex: 1; width: 2px; background: repeating-linear-gradient(#fff 0 2px, transparent 2px 5px); }
.handle.flat { width: 117px; height: 8px; padding: 0 4px; flex-direction: row; background: linear-gradient(#4a7cd0, #123f92); }
.handle.flat .dots, .nav-grip .dots { height: 2px; background: repeating-linear-gradient(90deg, #fff 0 2px, transparent 2px 5px); }

.document { flex: 1; min-width: 0; display: flex; flex-direction: column; }
.tabs { display: flex; align-items: flex-end; height: 22px; padding: 1px 0 0 1px; }
.tabs button { height: 20px; padding: 0 7px; border: 1px solid #8a8e94; border-bottom: 0; background: linear-gradient(#f4f4f4 50%, #dcdcdc); }
.tabs .active { height: 22px; padding: 0 9px 2px; background: #fff; }
.page { flex: 1; min-height: 0; display: flex; flex-direction: column; border: 1px solid #7b8a9c; border-bottom-width: 2px; background: #f0f0f0; margin-right: 1px; }
.results { flex: 0 0 338px; display: flex; border-bottom: 4px solid #c3daf9; }
.source { flex: 1; min-width: 0; padding: 1px 4px 3px 7px; display: flex; flex-direction: column; border-right: 4px solid #c3daf9; }
.hits { flex: 0 0 550px; padding: 1px 9px 0 4px; display: flex; flex-direction: column; }
.results h3 { height: 23px; line-height: 18px; padding-left: 1px; }
.source .grid-box { flex: 1; }
.grid-box { border: 1px solid #c4c8cc; background: #fff; overflow: hidden; }

.grid { width: 100%; table-layout: fixed; border-collapse: separate; border-spacing: 0; line-height: 13px; }
.grid th {
  height: 23px;
  padding: 0 0 1px;
  font-weight: normal;
  border-right: 1px solid #d4d6d8;
  border-bottom: 1px solid #cfd1d3;
  background: linear-gradient(#fff, #f0f1f2);
}
.grid.left th { text-align: left; padding-left: 5px; }
.grid th:first-child { padding: 0; }
.grid td { height: 17px; padding: 0 0 2px 4px; white-space: nowrap; border-right: 1px dotted #c6c6c6; border-bottom: 1px dotted #b4b4b4; }
.grid td:first-child { padding: 3px 0 0 4px; background: linear-gradient(#fcfcfc, #eceeef); border-bottom: 1px solid #cfd1d3; }
.c-num { width: 37px; }
.c-name { width: 167px; }
.c-hit { width: 210px; }
.c-score { width: 79px; }
.c-prop { width: 97px; }
.chooser { width: 35px; height: 22px; display: grid; place-items: center; border: 1px solid #707070; border-radius: 3px; background: linear-gradient(#f6f6f6, #d8d8d8); }
.rownum { display: flex; align-items: center; justify-content: space-between; height: 13px; padding-right: 2px; }
.ptr { margin-left: auto; border: 5px solid transparent; border-left-color: #000; border-right: 0; }
.grid .current td:last-child, .grid .all td:not(:first-child), .props .all td { background: #3399ff; color: #fff; }
.hit-scroll { flex: 1; overflow: hidden; }
.hit-box { position: relative; display: flex; height: 262px; overflow: visible; }
.hit-box .current td:last-child { outline: 1px dotted #000; outline-offset: -1px; }
.scrollbar { flex: 0 0 17px; padding: 8px 0; display: flex; flex-direction: column; align-items: center; border-left: 1px solid #e2e2e2; background: #f2f2f2; }
.thumb { width: 14px; height: 76px; margin: 6px 0 auto; border: 1px solid #9a9a9a; border-radius: 2px; background: linear-gradient(90deg, #f6f6f6, #c9c9c9); }
/* 選択したヒットを囲む枠 */
.callout { position: absolute; left: 0; right: 0; top: 42px; height: 45px; border: 10px solid #ec1c24; border-radius: 14px; pointer-events: none; }
.actions { display: flex; justify-content: flex-end; gap: 8px; padding: 9px 3px 0; }
.actions button { width: 138px; height: 31px; border: 1px solid #707070; border-radius: 3px; background: linear-gradient(#f4f4f4 45%, #dedede 50%, #cfcfcf); box-shadow: inset 0 0 0 1px #fbfbfb; }
.actions .primary { width: 177px; border-color: #3c7fb1; background: linear-gradient(#eaf6fd 45%, #c4e8fb 50%, #a7d9f5); }

/* スペクトル表示 */
.detail { flex: 1; min-height: 0; display: flex; }
.plot-pane { flex: 1; min-width: 0; padding-top: 2px; display: flex; flex-direction: column; border-right: 4px solid #c3daf9; }
.plot-row { display: flex; margin-right: 4px; }
.plot-tools { flex: 0 0 31px; padding: 3px 0 0 10px; display: flex; flex-direction: column; gap: 6px; border-right: 1px solid #8c8c8c; }
.plot-tools button { width: 16px; height: 16px; }
.plot-tools .abc { height: 12px; margin: 2px 0; border: 1px solid #2f7cc8; background: #fff; color: #22306a; font: 7px/9px "DejaVu Sans", sans-serif; }
.plot-tools .letter { color: #0028d8; font: bold 17px/18px "Liberation Sans", sans-serif; }
.plot { flex: 1; min-width: 0; background: #fff; font-size: 13px; font-family: "Liberation Sans", sans-serif; }
.axis { fill: none; stroke: #000; }
.ylabels { text-anchor: end; }
.xlabels { text-anchor: middle; }
.unit { font-size: 15px; }
.ref, .sample { fill: none; stroke: #000; stroke-width: 3; stroke-linejoin: round; }
.ref { stroke: #b01820; }
.legend {
  margin: 0 4px 0 32px;
  min-width: calc(100% - 36px);
  table-layout: fixed;
  border: 1px solid #555;
  border-spacing: 0;
  background: #fff;
  font-family: "Noto Sans", "Noto Sans CJK JP", sans-serif;
  font-size: 12px;
  font-feature-settings: normal;
  white-space: nowrap;
}
.l-name { width: 200px; }
.l-desc { width: 250px; }
.legend th { height: 24px; padding: 0 6px; text-align: left; font-weight: normal; border-right: 1px solid #dcdfe3; border-bottom: 1px solid #cfd3d8; background: linear-gradient(#fff 40%, #eff1f4); }
.legend th:last-child { border-right: 0; }
.legend td { height: 22px; padding: 0 5px; }
.legend td span { display: flex; align-items: center; gap: 1px; }
.line { width: 32px; height: 2px; background: #000; }
.line.red { background: #e01010; }
.error { display: flex; align-items: center; gap: 26px; padding: 4px 8px; line-height: 18px; }
.error a { color: #0000d0; text-decoration: underline; }

.props { flex: 0 0 325px; padding: 2px 8px 29px 3px; display: flex; }
.props .grid-box { flex: 1; border-color: #a8adb4; }
.props h3 { height: 20px; line-height: 20px; text-align: center; border-bottom: 1px solid #d0d3d6; background: linear-gradient(#fff, #f1f2f4); }
.props .grid th, .props .grid td:first-child { padding-left: 4px; }
.props .grid th { height: 25px; }
.props .grid td:first-child { padding-top: 0; padding-bottom: 2px; border-bottom: 1px dotted #b4b4b4; }
.props .grid tr:not(.all) td:first-child { background: #fff; }
.props .grid .all td:first-child { background: #3399ff; }
.bottom-split { height: 9px; display: flex; justify-content: center; padding-top: 1px; }

/* 右側ナビゲータ */
.navigator { flex: 0 0 175px; display: flex; flex-direction: column; border: 1px solid #00349a; border-width: 0 1px; }
.navigator h2 { height: 27px; padding: 0 6px; color: #fff; font-size: 19px; line-height: 25px; background: linear-gradient(#5b8ad6, #0b3d98); font-feature-settings: normal; }
.nav-list { position: relative; flex: 1; min-height: 0; overflow: hidden; background: #fff; }
.nav-list a { height: 57px; padding-top: 4px; display: flex; flex-direction: column; align-items: center; gap: 5px; border: 1px solid transparent; }
.nav-list .active { border-color: #00349a; background: linear-gradient(#ffd28a, #ffab4f); }
.nav-list .peeking { padding-top: 1px; }
.nav-more { position: absolute; right: 0; bottom: 2px; width: 16px; height: 16px; display: grid; place-items: center; background: #eee; }
.nav-grip { height: 7px; display: flex; justify-content: center; padding-top: 2px; background: linear-gradient(#4a7cd0, #123f92); }
.nav-grip .dots { flex: 0 0 35px; }
.nav-button { height: 40px; padding: 0 3px 2px; display: flex; align-items: center; gap: 4px; border-top: 1px solid #00349a; background: linear-gradient(#c6dbf9, #83aae6); font-weight: bold; }
.nav-button.active { background: linear-gradient(#fbe08a, #f0a02c); }
.nav-button.last { height: 31px; justify-content: flex-end; border-bottom: 1px solid #00349a; }

.statusbar { flex: none; height: 23px; padding: 2px 1px 2px 0; display: flex; justify-content: flex-end; gap: 2px; border-top: 1px solid #6c8cc4; background: linear-gradient(#dbe8fc, #8cb0ea); }
.statusbar span { display: flex; align-items: center; gap: 3px; padding: 0 1px 0 2px; border: 1px solid #7c9fd8; }
.statusbar .only { padding: 0; }
.statusbar .wait { padding-right: 5px; }

/* タスクバー */
.taskbar { flex: none; height: 40px; padding-left: 7px; display: flex; align-items: center; border-top: 1px solid #5d89a6; background: linear-gradient(90deg, #17364f 0, #1c4a6e 70px, #1b4363 45%, #1c4a6c 84%, #162f42 88%, #1b3c54); color: #fff; }
.taskbar > button { display: grid; place-items: center; width: 62px; height: 39px; }
.taskbar .start { width: 40px; margin-right: 11px; }
.taskbar .running { width: 59px; margin-left: 2px; border: 1px solid #d3dde4; border-radius: 3px; background: linear-gradient(135deg, #aebac2, #7b8f9d); }
.tray { margin-left: auto; display: flex; align-items: center; align-self: stretch; gap: 10px; }
.ime { font: 17px/20px "Liberation Sans", sans-serif; }
.clock { width: 76px; display: flex; flex-direction: column; align-items: center; gap: 1px; font: 12px/17px "Noto Sans", sans-serif; }
.peek { align-self: stretch; width: 14px; border: 1px solid #6f8796; background: linear-gradient(135deg, #5d7383, #1b3346); }
```
